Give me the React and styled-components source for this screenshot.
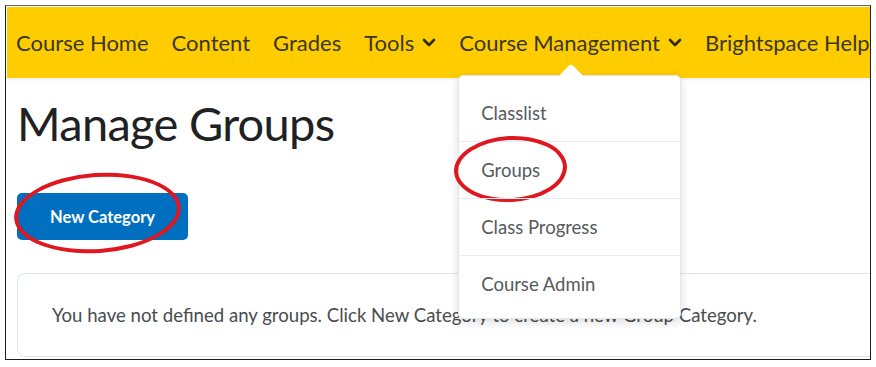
import React from 'react';
import styled, { createGlobalStyle } from 'styled-components';

const GlobalStyle = createGlobalStyle`
  html, body {
    margin: 0;
    padding: 0;
    background: #ffffff;
  }
  body {
    font-family: Lato, "Noto Sans", sans-serif;
  }
`

const Frame = styled.div`
  margin: 5px 0 0 5px;
  width: 863px;
  height: 352px;
  border: 1px solid #1e1e1e;
  border-top-color: #6a6a6a;
  padding: 1px 0 0 1px;
  overflow: hidden;
  position: relative;
`

const NavBar = styled.nav`
  display: flex;
  align-items: center;
  gap: 23px;
  height: 71px;
  padding-left: 9px;
  background: #ffcc00;
  box-shadow: 0 2px 2px rgba(0, 0, 0, 0.06);
  position: relative;
  z-index: 2;
  white-space: nowrap;
`

const NavItem = styled.div`
  position: relative;
  display: flex;
  align-items: center;
  gap: 8px;
  height: 100%;
  font-size: 22px;
  color: #3a3720;
`

const Chevron = () => (
  <svg width="14" height="9" viewBox="0 0 14 9">
    <polyline points="2,2 7,7 12,2" fill="none" stroke="#2e2b16" strokeWidth="2.6" strokeLinecap="round" strokeLinejoin="round" />
  </svg>
)

const Menu = styled.div`
  position: absolute;
  top: calc(100% - 3px);
  left: -1px;
  width: 223px;
  padding: 8px 0 6px;
  background: #fff;
  border: 1px solid #e3e6ea;
  border-radius: 5px;
  box-shadow: 0 3px 10px rgba(0, 0, 0, 0.14);
  box-sizing: border-box;

  &::before {
    content: '';
    position: absolute;
    top: -9px;
    left: 104px;
    width: 16px;
    height: 16px;
    background: #fff;
    transform: rotate(45deg);
    border-radius: 3px 0 0 0;
  }
`

const MenuItem = styled.div`
  position: relative;
  height: 57px;
  display: flex;
  align-items: center;
  padding-left: 22px;
  font-size: 18.5px;
  color: #565a5c;
  border-top: ${p => p.first ? 'none' : '1px solid #e9edf2'};
  box-sizing: border-box;
`

const Ring = styled.div`
  position: absolute;
  border: 4px solid #e0171f;
  border-radius: 50%;
  box-sizing: border-box;
  pointer-events: none;
  left: ${p => p.left}px;
  top: ${p => p.top}px;
  width: ${p => p.w}px;
  height: ${p => p.h}px;
  transform: rotate(${p => p.rot || 0}deg);
`

const Main = styled.main`
  padding: 0 0 0 10px;
`

const Title = styled.h1`
  margin: 17px 0 0;
  font-size: 47px;
  font-weight: 400;
  line-height: 56px;
  color: #202122;
  letter-spacing: -0.7px;
`

const ButtonWrap = styled.div`
  position: relative;
  margin-top: 42px;
  width: 171px;
`

const PrimaryButton = styled.button`
  width: 171px;
  height: 47px;
  border: none;
  border-radius: 5px;
  background: #006fbf;
  color: #fff;
  font-family: Lato, sans-serif;
  font-size: 16.5px;
  font-weight: 700;
`

const EmptyBox = styled.div`
  margin-top: 33px;
  margin-right: -12px;
  height: 84px;
  border: 1px solid #dfe5ec;
  border-radius: 8px;
  display: flex;
  align-items: center;
  padding-left: 34px;
  font-size: 18.6px;
  color: #494c4e;
  box-sizing: border-box;
  white-space: nowrap;
`

const menuItems = ['Classlist', 'Groups', 'Class Progress', 'Course Admin'];

export default function App() {
  return (
    <>
      <GlobalStyle />
      <Frame>
        <NavBar>
          <NavItem>Course Home</NavItem>
          <NavItem>Content</NavItem>
          <NavItem>Grades</NavItem>
          <NavItem>Tools <Chevron /></NavItem>
          <NavItem>
            Course Management <Chevron />
            <Menu>
              {menuItems.map((item, i) => (
                <MenuItem key={item} first={i === 0}>
                  {item}
                  {item === 'Groups' && <Ring left={-5} top={-6} w={113} h={66} rot={-3} />}
                </MenuItem>
              ))}
            </Menu>
          </NavItem>
          <NavItem>Brightspace Help</NavItem>
        </NavBar>
        <Main>
          <Title>Manage Groups</Title>
          <ButtonWrap>
            <PrimaryButton>New Category</PrimaryButton>
            <Ring left={-3} top={-20} w={167} h={80} rot={-4} />
          </ButtonWrap>
          <EmptyBox>You have not defined any groups. Click New Category to create a new Group Category.</EmptyBox>
        </Main>
      </Frame>
    </>
  );
}
